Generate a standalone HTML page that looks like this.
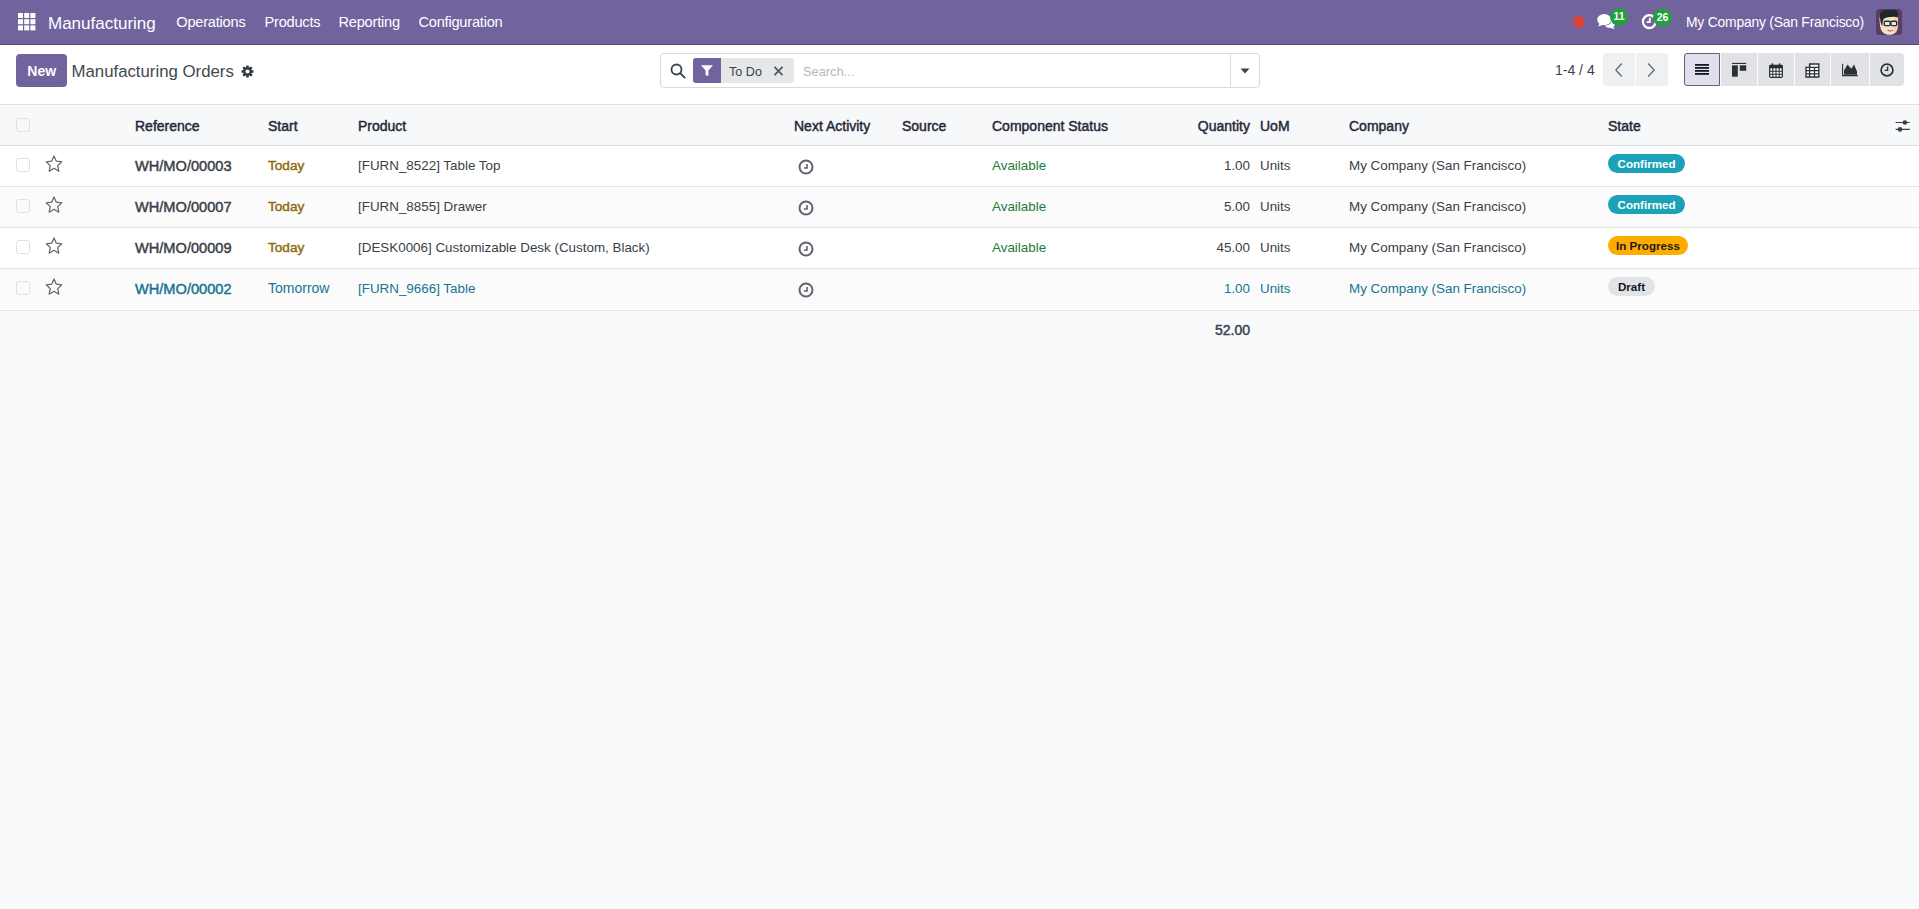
<!DOCTYPE html>
<html><head><meta charset="utf-8">
<style>
html,body{margin:0;padding:0}
body{width:1919px;height:909px;overflow:hidden;position:relative;background:#f9fafb;font-family:"Liberation Sans",sans-serif;color:#374151}
.a{position:absolute}
.t{position:absolute;line-height:1;white-space:nowrap}
#nav{left:0;top:0;width:1919px;height:44px;background:#71639e;border-bottom:1px solid #514862}
#cp{left:0;top:45px;width:1919px;height:59px;background:#fff;border-bottom:1px solid #dcdee1}
.nv{color:#fff;font-size:14.6px;letter-spacing:-0.22px}
.hd{font-weight:400;-webkit-text-stroke:0.45px currentColor;font-size:14px;color:#1f2937;top:119.3px}
.row{position:absolute;left:0;width:1919px;border-bottom:1px solid #e1e3e7}
.cb{position:absolute;left:16px;width:12px;height:12px;border:1px solid #dfe1e5;border-radius:3px;background:transparent}
.rf{font-size:14.6px;font-weight:400;-webkit-text-stroke:0.45px currentColor}
.sb{font-weight:400;-webkit-text-stroke:0.45px currentColor}
.bd{position:absolute;height:19px;border-radius:10px;font-weight:700;font-size:11.6px;line-height:20px;text-align:center}
</style></head>
<body>
<!-- NAVBAR -->
<div id="nav" class="a"></div>
<svg class="a" style="left:18px;top:13px" width="18" height="18" viewBox="0 0 18 18">
 <g fill="#fff">
  <rect x="0" y="0" width="5" height="5"/><rect x="6.2" y="0" width="5" height="5"/><rect x="12.4" y="0" width="5" height="5"/>
  <rect x="0" y="6.2" width="5" height="5"/><rect x="6.2" y="6.2" width="5" height="5"/><rect x="12.4" y="6.2" width="5" height="5"/>
  <rect x="0" y="12.4" width="5" height="5"/><rect x="6.2" y="12.4" width="5" height="5"/><rect x="12.4" y="12.4" width="5" height="5"/>
 </g>
</svg>
<span class="t nv" style="left:48px;top:14.9px;font-size:17px;letter-spacing:0">Manufacturing</span>
<span class="t nv" style="left:176.3px;top:15.2px">Operations</span>
<span class="t nv" style="left:264.5px;top:15.2px">Products</span>
<span class="t nv" style="left:338.5px;top:15.2px">Reporting</span>
<span class="t nv" style="left:418.5px;top:15.2px">Configuration</span>

<div class="a" style="left:1573px;top:15.8px;width:12px;height:12px;border-radius:50%;background:#de4136"></div>
<!-- chat icon -->
<svg class="a" style="left:1597px;top:13px" width="19" height="17" viewBox="0 0 19 17">
 <path d="M14.6 7.2 C17.6 8.2 18.6 10.3 17.8 12.2 C17.4 13.1 16.8 13.7 16.2 14 L17.8 16.3 L13 14.8 C10.8 15 8.8 14 7.9 12.7 C11.5 12.6 14.3 10.6 14.6 7.2Z" fill="#fff"/>
 <ellipse cx="7.2" cy="6.6" rx="7" ry="5.6" fill="#fff"/>
 <path d="M2.6 10 L1.4 13.6 L6.4 11.4Z" fill="#fff"/>
</svg>
<div class="a" style="left:1610px;top:7.8px;width:18px;height:18px;border-radius:50%;background:#1fa13b;color:#fff;font-size:10.5px;font-weight:700;line-height:17px;text-align:center">11</div>
<!-- activity icon -->
<svg class="a" style="left:1641px;top:13px" width="17" height="17" viewBox="0 0 17 17">
 <circle cx="8.3" cy="8.6" r="6.4" fill="none" stroke="#fff" stroke-width="2.3"/>
 <path d="M8.8 4.8 V9.1 H5.6" fill="none" stroke="#fff" stroke-width="1.9"/>
</svg>
<div class="a" style="left:1653px;top:8.6px;width:19px;height:17px;border-radius:9px;background:#1fa13b;color:#fff;font-size:10.5px;font-weight:700;line-height:17px;text-align:center">26</div>
<span class="t nv" style="left:1686px;top:15.8px;font-size:13.9px;letter-spacing:-0.22px">My Company (San Francisco)</span>
<!-- avatar -->
<svg class="a" style="left:1876px;top:9px" width="26" height="26" viewBox="0 0 26 26">
 <rect width="26" height="26" rx="3.5" fill="#5e3b5b"/>
 <path d="M3.5 9 C3.5 8 5 7 7 7 L20 7 C21.5 7 22 8.5 22 10 L21.8 18 C21.5 23 18 25.8 13.5 25.8 C8.5 25.8 5.5 23 4.5 19 C3.8 16 3.5 12 3.5 9Z" fill="#f7dfc9"/>
 <path d="M18.5 9 L22 9.5 L21.8 18 C21.5 21 20 23.5 18 24.5Z" fill="#e9c3ad" opacity="0.6"/>
 <path d="M4 8.5 C3.5 4 5 1.3 9 1 L17 0.8 C19.5 0.8 21.5 2 22 4.5 L21.5 8.5 C19 7.3 15 7.8 12 8.3 C9 8.8 7.5 9.5 6.8 12 L6.3 17 C5 15.5 4.2 12 4 8.5Z" fill="#22262a"/>
 <rect x="8.2" y="12.3" width="6" height="4.3" rx="1" fill="#dfe6e8" stroke="#2e2e2e" stroke-width="1.4"/>
 <rect x="14.9" y="12.3" width="5.8" height="4.3" rx="1" fill="#dfe6e8" stroke="#2e2e2e" stroke-width="1.4"/>
 <path d="M11.5 21 C13 22.3 15.5 22.3 17 20.8" fill="none" stroke="#9b6a5c" stroke-width="1.1"/>
</svg>

<!-- CONTROL PANEL -->
<div id="cp" class="a"></div>
<div class="a" style="left:16px;top:54px;width:51px;height:33px;border-radius:4px;background:#71639e"></div>
<span class="t" style="left:27.3px;top:64.2px;font-size:14px;font-weight:700;color:#fff">New</span>
<span class="t" style="left:71.5px;top:63.6px;font-size:16.8px;color:#424850">Manufacturing Orders</span>
<!-- gear -->
<svg class="a" style="left:240.6px;top:64.5px" width="13" height="13" viewBox="0 0 13 13">
 <g fill="#2f3640" transform="translate(6.5 6.5)">
  <rect x="-1.25" y="-6" width="2.5" height="12" rx="0.5"/>
  <rect x="-1.25" y="-6" width="2.5" height="12" rx="0.5" transform="rotate(45)"/>
  <rect x="-1.25" y="-6" width="2.5" height="12" rx="0.5" transform="rotate(90)"/>
  <rect x="-1.25" y="-6" width="2.5" height="12" rx="0.5" transform="rotate(135)"/>
  <circle r="4.4"/>
 </g>
 <circle cx="6.5" cy="6.5" r="2.1" fill="#fff"/>
</svg>

<!-- search -->
<div class="a" style="left:660px;top:53px;width:598px;height:33px;border:1px solid #d8dadd;border-radius:4px;background:#fff"></div>
<div class="a" style="left:1230px;top:54px;width:1px;height:33px;background:#d8dadd"></div>
<svg class="a" style="left:670px;top:63px" width="16" height="16" viewBox="0 0 16 16">
 <circle cx="6.5" cy="6.5" r="5" fill="none" stroke="#374151" stroke-width="1.8"/>
 <path d="M10.2 10.2 L14.6 14.6" stroke="#374151" stroke-width="1.9" stroke-linecap="round"/>
</svg>
<div class="a" style="left:693px;top:58px;width:28px;height:25px;background:#71639e;border-radius:3px 0 0 3px"></div>
<svg class="a" style="left:700px;top:64px" width="14" height="13" viewBox="0 0 14 13">
 <path d="M1 1.2 H13 L8.4 6.6 V11.8 L5.6 11.2 V6.6Z" fill="#fff"/>
</svg>
<div class="a" style="left:721px;top:58px;width:73px;height:25px;background:#e5e7e9;border-radius:0 3px 3px 0"></div>
<span class="t" style="left:729px;top:66px;font-size:12.6px;color:#374151">To Do</span>
<svg class="a" style="left:773px;top:66px" width="11" height="10" viewBox="0 0 11 10">
 <path d="M1.5 0.8 L9.5 9.2 M9.5 0.8 L1.5 9.2" stroke="#50555c" stroke-width="1.7"/>
</svg>
<span class="t" style="left:803px;top:66px;font-size:12.8px;color:#b6b9bf">Search...</span>
<svg class="a" style="left:1240px;top:68px" width="10" height="6" viewBox="0 0 10 6">
 <path d="M0.5 0.5 H9.5 L5 5.5Z" fill="#374151"/>
</svg>

<!-- pager -->
<span class="t" style="left:1555px;top:63.2px;font-size:14px;color:#374151">1-4 / 4</span>
<div class="a" style="left:1603px;top:53px;width:65px;height:33px;background:#eef0f2;border-radius:4px"></div>
<div class="a" style="left:1635px;top:53px;width:1px;height:33px;background:#fff"></div>
<svg class="a" style="left:1613px;top:62px" width="12" height="16" viewBox="0 0 12 16">
 <path d="M8.8 1.5 L2.8 8 L8.8 14.5" fill="none" stroke="#5f636f" stroke-width="1.2"/>
</svg>
<svg class="a" style="left:1645px;top:62px" width="12" height="16" viewBox="0 0 12 16">
 <path d="M3.2 1.5 L9.2 8 L3.2 14.5" fill="none" stroke="#5f636f" stroke-width="1.2"/>
</svg>

<!-- view switcher -->
<div class="a" style="left:1684px;top:53px;width:220px;height:33px;background:#e0e2e5;border-radius:4px"></div>
<div class="a" style="left:1720px;top:53px;width:1px;height:33px;background:#fbfbfc"></div>
<div class="a" style="left:1757px;top:53px;width:1px;height:33px;background:#fbfbfc"></div>
<div class="a" style="left:1794px;top:53px;width:1px;height:33px;background:#fbfbfc"></div>
<div class="a" style="left:1830px;top:53px;width:1px;height:33px;background:#fbfbfc"></div>
<div class="a" style="left:1869px;top:53px;width:1px;height:33px;background:#fbfbfc"></div>
<div class="a" style="left:1684px;top:53px;width:34px;height:31px;background:#e1dfeb;border:1px solid #645e80;border-radius:3px 0 0 3px"></div>
<svg class="a" style="left:1695px;top:64px" width="14" height="12" viewBox="0 0 14 12">
 <g fill="#111827"><rect x="0" y="0" width="14" height="1.8"/><rect x="0" y="3" width="14" height="1.8"/><rect x="0" y="6" width="14" height="1.8"/><rect x="0" y="9" width="14" height="1.8"/></g>
</svg>
<svg class="a" style="left:1732px;top:62px" width="15" height="15" viewBox="0 0 15 15">
 <g fill="#2b2f36"><rect x="0" y="0.9" width="14.2" height="1.1"/><rect x="0" y="3.3" width="5.8" height="11.4"/><rect x="7.8" y="3.3" width="6.4" height="5.5"/></g>
</svg>
<svg class="a" style="left:1769px;top:62.5px" width="14" height="15" viewBox="0 0 14 15">
 <rect x="0.7" y="2.4" width="12.6" height="11.9" rx="0.8" fill="#fff" stroke="#2b2f36" stroke-width="1.3"/>
 <rect x="0.5" y="2.2" width="13" height="3.2" fill="#2b2f36"/>
 <g stroke="#2b2f36" stroke-width="1.1"><path d="M0.7 8.3 H13.3 M0.7 11.2 H13.3 M3.8 5 V14.3 M7 5 V14.3 M10.2 5 V14.3"/></g>
 <rect x="2.6" y="0.3" width="1.6" height="3.2" rx="0.6" fill="#2b2f36"/>
 <rect x="9.8" y="0.3" width="1.6" height="3.2" rx="0.6" fill="#2b2f36"/>
</svg>
<svg class="a" style="left:1805px;top:62.5px" width="15" height="15" viewBox="0 0 15 15">
 <path d="M4.6 1 H13.8 V14 H1 V4.3 H4.6Z" fill="#fff" stroke="#2b2f36" stroke-width="1.3"/>
 <g stroke="#2b2f36" stroke-width="1.3" fill="none"><path d="M4.6 1 V14 M1 7.6 H13.8 M1 10.8 H13.8 M4.6 4.3 H13.8 M9.5 4.3 V14"/></g>
</svg>
<svg class="a" style="left:1842px;top:63px" width="17" height="14" viewBox="0 0 17 14">
 <path d="M0.6 0.8 V12.6 H15.8" fill="none" stroke="#2b2f36" stroke-width="1.1"/>
 <path d="M2 11.8 V7.5 L5.5 1.5 L9.3 5.8 L12 1.5 L15 8.5 V11.8Z" fill="#2b2f36"/>
</svg>
<svg class="a" style="left:1880px;top:63px" width="14" height="14" viewBox="0 0 14 14">
 <circle cx="7" cy="7" r="5.9" fill="none" stroke="#2b2f36" stroke-width="1.7"/>
 <path d="M7.6 3.4 V7.4 H4.6" fill="none" stroke="#2b2f36" stroke-width="1.4"/>
</svg>

<!-- TABLE -->
<div class="a" style="left:0;top:105px;width:1919px;height:40px;background:#f7f8fa;border-bottom:1px solid #dcdee1"></div>
<div class="a" style="left:0;top:105px;width:1919px;height:1px;background:#fcfdfd"></div>
<div class="cb" style="top:118px"></div>
<span class="t hd" style="left:135px">Reference</span>
<span class="t hd" style="left:268px">Start</span>
<span class="t hd" style="left:358px">Product</span>
<span class="t hd" style="left:794px">Next Activity</span>
<span class="t hd" style="left:902px">Source</span>
<span class="t hd" style="left:992px">Component Status</span>
<span class="t hd" style="right:669px">Quantity</span>
<span class="t hd" style="left:1260px">UoM</span>
<span class="t hd" style="left:1349px">Company</span>
<span class="t hd" style="left:1608px">State</span>
<svg class="a" style="left:1895px;top:119px" width="15" height="14" viewBox="0 0 15 14">
 <path d="M0.6 3.5 H14.8 M0.6 10.4 H14.8" stroke="#3a3f47" stroke-width="1.1"/>
 <circle cx="9.9" cy="3.5" r="2.3" fill="#3a3f47"/>
 <circle cx="5" cy="10.4" r="2.3" fill="#3a3f47"/>
</svg>

<!-- rows -->
<div class="row" style="top:146px;height:40px;background:#fff"></div>
<div class="row" style="top:187px;height:40px;background:#fbfbfc"></div>
<div class="row" style="top:228px;height:40px;background:#fff"></div>
<div class="row" style="top:269px;height:41px;background:#fbfbfc"></div>
<div class="a" style="left:0;top:309px;width:1919px;height:1px;background:#fff"></div>

<div class="cb" style="top:157.9px"></div>
<svg class="a" style="left:45px;top:155.1px" width="18" height="18" viewBox="0 0 18 18"><path d="M9 1 L11.3 6.2 L16.8 6.8 L12.7 10.6 L13.8 16.2 L9 13.3 L4.2 16.2 L5.3 10.6 L1.2 6.8 L6.7 6.2Z" fill="none" stroke="#62666e" stroke-width="1.25" stroke-linejoin="round"/></svg>
<span class="t rf" style="left:135px;top:158.6px;color:#3a3f47">WH/MO/00003</span>
<span class="t sb" style="left:268px;top:158.6px;font-size:13.6px;color:#8d6c0e">Today</span>
<span class="t" style="left:358px;top:158.6px;font-size:13.4px;color:#3a3f47">[FURN_8522] Table Top</span>
<svg class="a" style="left:798px;top:158.5px" width="16" height="16" viewBox="0 0 16 16"><circle cx="8" cy="8" r="6.5" fill="none" stroke="#5f636f" stroke-width="2"/><path d="M9 4.9 V9 H5.9" fill="none" stroke="#5f636f" stroke-width="1.6"/></svg>
<span class="t" style="left:992px;top:158.6px;font-size:13.4px;color:#1c7a3d">Available</span>
<span class="t" style="right:669px;top:158.6px;font-size:13.4px;color:#3a3f47">1.00</span>
<span class="t" style="left:1260px;top:158.6px;font-size:13.4px;color:#3a3f47">Units</span>
<span class="t" style="left:1349px;top:158.6px;font-size:13.4px;color:#3a3f47">My Company (San Francisco)</span>
<div class="bd" style="left:1608px;top:154.1px;width:77px;background:#1ba2b6;color:#fff">Confirmed</div>
<div class="cb" style="top:199.0px"></div>
<svg class="a" style="left:45px;top:196.2px" width="18" height="18" viewBox="0 0 18 18"><path d="M9 1 L11.3 6.2 L16.8 6.8 L12.7 10.6 L13.8 16.2 L9 13.3 L4.2 16.2 L5.3 10.6 L1.2 6.8 L6.7 6.2Z" fill="none" stroke="#62666e" stroke-width="1.25" stroke-linejoin="round"/></svg>
<span class="t rf" style="left:135px;top:199.7px;color:#3a3f47">WH/MO/00007</span>
<span class="t sb" style="left:268px;top:199.7px;font-size:13.6px;color:#8d6c0e">Today</span>
<span class="t" style="left:358px;top:199.7px;font-size:13.4px;color:#3a3f47">[FURN_8855] Drawer</span>
<svg class="a" style="left:798px;top:199.6px" width="16" height="16" viewBox="0 0 16 16"><circle cx="8" cy="8" r="6.5" fill="none" stroke="#5f636f" stroke-width="2"/><path d="M9 4.9 V9 H5.9" fill="none" stroke="#5f636f" stroke-width="1.6"/></svg>
<span class="t" style="left:992px;top:199.7px;font-size:13.4px;color:#1c7a3d">Available</span>
<span class="t" style="right:669px;top:199.7px;font-size:13.4px;color:#3a3f47">5.00</span>
<span class="t" style="left:1260px;top:199.7px;font-size:13.4px;color:#3a3f47">Units</span>
<span class="t" style="left:1349px;top:199.7px;font-size:13.4px;color:#3a3f47">My Company (San Francisco)</span>
<div class="bd" style="left:1608px;top:195.2px;width:77px;background:#1ba2b6;color:#fff">Confirmed</div>
<div class="cb" style="top:240.0px"></div>
<svg class="a" style="left:45px;top:237.2px" width="18" height="18" viewBox="0 0 18 18"><path d="M9 1 L11.3 6.2 L16.8 6.8 L12.7 10.6 L13.8 16.2 L9 13.3 L4.2 16.2 L5.3 10.6 L1.2 6.8 L6.7 6.2Z" fill="none" stroke="#62666e" stroke-width="1.25" stroke-linejoin="round"/></svg>
<span class="t rf" style="left:135px;top:240.7px;color:#3a3f47">WH/MO/00009</span>
<span class="t sb" style="left:268px;top:240.7px;font-size:13.6px;color:#8d6c0e">Today</span>
<span class="t" style="left:358px;top:240.7px;font-size:13.4px;color:#3a3f47">[DESK0006] Customizable Desk (Custom, Black)</span>
<svg class="a" style="left:798px;top:240.6px" width="16" height="16" viewBox="0 0 16 16"><circle cx="8" cy="8" r="6.5" fill="none" stroke="#5f636f" stroke-width="2"/><path d="M9 4.9 V9 H5.9" fill="none" stroke="#5f636f" stroke-width="1.6"/></svg>
<span class="t" style="left:992px;top:240.7px;font-size:13.4px;color:#1c7a3d">Available</span>
<span class="t" style="right:669px;top:240.7px;font-size:13.4px;color:#3a3f47">45.00</span>
<span class="t" style="left:1260px;top:240.7px;font-size:13.4px;color:#3a3f47">Units</span>
<span class="t" style="left:1349px;top:240.7px;font-size:13.4px;color:#3a3f47">My Company (San Francisco)</span>
<div class="bd" style="left:1608px;top:236.2px;width:80px;background:#ffac00;color:#1a1a1a">In Progress</div>
<div class="cb" style="top:281.1px"></div>
<svg class="a" style="left:45px;top:278.3px" width="18" height="18" viewBox="0 0 18 18"><path d="M9 1 L11.3 6.2 L16.8 6.8 L12.7 10.6 L13.8 16.2 L9 13.3 L4.2 16.2 L5.3 10.6 L1.2 6.8 L6.7 6.2Z" fill="none" stroke="#62666e" stroke-width="1.25" stroke-linejoin="round"/></svg>
<span class="t rf" style="left:135px;top:281.8px;color:#167590">WH/MO/00002</span>
<span class="t" style="left:268px;top:281.2px;font-size:14px;color:#167590">Tomorrow</span>
<span class="t" style="left:358px;top:281.8px;font-size:13.4px;color:#167590">[FURN_9666] Table</span>
<svg class="a" style="left:798px;top:281.7px" width="16" height="16" viewBox="0 0 16 16"><circle cx="8" cy="8" r="6.5" fill="none" stroke="#5f636f" stroke-width="2"/><path d="M9 4.9 V9 H5.9" fill="none" stroke="#5f636f" stroke-width="1.6"/></svg>
<span class="t" style="right:669px;top:281.8px;font-size:13.4px;color:#167590">1.00</span>
<span class="t" style="left:1260px;top:281.8px;font-size:13.4px;color:#167590">Units</span>
<span class="t" style="left:1349px;top:281.8px;font-size:13.4px;color:#167590">My Company (San Francisco)</span>
<div class="bd" style="left:1608px;top:277.3px;width:47px;background:#e1e3e7;color:#111827">Draft</div>
<span class="t sb" style="right:669px;top:323.4px;font-size:14px;color:#374151">52.00</span>
</body></html>
